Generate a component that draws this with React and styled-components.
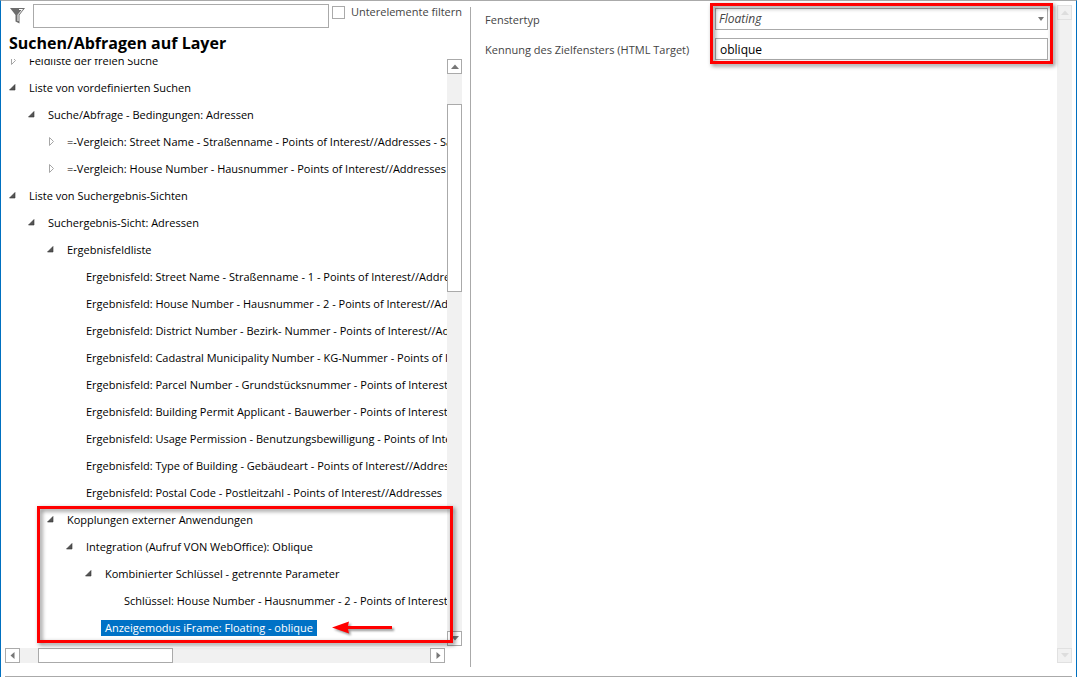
import React from 'react';
import styled, { createGlobalStyle, css } from 'styled-components';

const GlobalStyle = createGlobalStyle`
    * {
        box-sizing: border-box;
    }
    body {
        margin: 0;
        background-color: #fff;
        font-family: 'Open Sans', 'Noto Sans', sans-serif;
        font-size: 11px;
        color: #444;
    }
`

// toggle: 'open', 'closed' or nothing for a leaf
const nodes = [
    {level: 0, toggle: 'closed', title: 'Feldliste der freien Suche'},
    {level: 0, toggle: 'open', title: 'Liste von vordefinierten Suchen'},
    {level: 1, toggle: 'open', title: 'Suche/Abfrage - Bedingungen: Adressen'},
    {level: 2, toggle: 'closed', title: '=-Vergleich: Street Name - Straßenname - Points of Interest//Addresses - Sa'},
    {level: 2, toggle: 'closed', title: '=-Vergleich: House Number - Hausnummer - Points of Interest//Addresses'},
    {level: 0, toggle: 'open', title: 'Liste von Suchergebnis-Sichten'},
    {level: 1, toggle: 'open', title: 'Suchergebnis-Sicht: Adressen'},
    {level: 2, toggle: 'open', title: 'Ergebnisfeldliste'},
    {level: 3, title: 'Ergebnisfeld: Street Name - Straßenname - 1 - Points of Interest//Addresses'},
    {level: 3, title: 'Ergebnisfeld: House Number - Hausnummer - 2 - Points of Interest//Addresses'},
    {level: 3, title: 'Ergebnisfeld: District Number - Bezirk- Nummer - Points of Interest//Addresses'},
    {level: 3, title: 'Ergebnisfeld: Cadastral Municipality Number - KG-Nummer - Points of Interest'},
    {level: 3, title: 'Ergebnisfeld: Parcel Number - Grundstücksnummer - Points of Interest'},
    {level: 3, title: 'Ergebnisfeld: Building Permit Applicant - Bauwerber - Points of Interest'},
    {level: 3, title: 'Ergebnisfeld: Usage Permission - Benutzungsbewilligung - Points of Interest'},
    {level: 3, title: 'Ergebnisfeld: Type of Building - Gebäudeart - Points of Interest//Addresses'},
    {level: 3, title: 'Ergebnisfeld: Postal Code - Postleitzahl - Points of Interest//Addresses'},
    {level: 2, toggle: 'open', title: 'Kopplungen externer Anwendungen'},
    {level: 3, toggle: 'open', title: 'Integration (Aufruf VON WebOffice): Oblique'},
    {level: 4, toggle: 'open', title: 'Kombinierter Schlüssel - getrennte Parameter'},
    {level: 5, title: 'Schlüssel: House Number - Hausnummer - 2 - Points of Interest'},
    {level: 4, title: 'Anzeigemodus iFrame: Floating - oblique', marked: true},
];

const arrows = {
    up: 'M4 0.5 L8 5 H0 Z',
    down: 'M0 0 H8 L4 4.5 Z',
    left: 'M5.5 -1 V6 L1.5 2.5 Z',
    right: 'M2.5 -1 V6 L6.5 2.5 Z',
};

const ScrollBar = ({horizontal, disabled, before, thumb, after}) => {
    const [first, last] = horizontal ? ['left', 'right'] : ['up', 'down'];
    return (
        <Track $horizontal={horizontal}>
            <ScrollButton type="button" aria-label={first} disabled={disabled}>
                <Arrow viewBox="0 0 8 5"><path d={arrows[first]} /></Arrow>
            </ScrollButton>
            <Space $size={before} />
            {thumb && <Thumb $size={thumb} $horizontal={horizontal} />}
            <Space $size={after} />
            <ScrollButton type="button" aria-label={last} disabled={disabled}>
                <Arrow viewBox="0 0 8 5"><path d={arrows[last]} /></Arrow>
            </ScrollButton>
        </Track>
    )
};

const TreeNode = ({node, selected, handleSelect}) => {
    return (
        <Row $level={node.level} role="treeitem" aria-level={node.level + 1} aria-selected={selected}>
            <Toggle>
                {node.toggle === 'open' &&
                    <svg width="7" height="7"><path d="M6 0.5 V6 H0.5 Z" fill="#555" stroke="#333" strokeWidth="0.6" /></svg>}
                {node.toggle === 'closed' &&
                    <svg width="7" height="9"><path d="M2.5 0.5 V8.5 L6.5 4.5 Z" fill="#fff" stroke="#a6a6a6" /></svg>}
            </Toggle>
            <Title type="button" $selected={selected} onClick={() => handleSelect(node.title)}>
                {node.title}
            </Title>
            {node.marked &&
                <Pointer viewBox="0 0 62 14">
                    <path d="M0 6.5 L17 0.5 L16 5 H60 V8 H16 L17 12.5 Z" fill="#f00" />
                </Pointer>}
        </Row>
    )
};

const App = () => {
    const [selected, setSelected] = React.useState('Anzeigemodus iFrame: Floating - oblique');

    return (
        <>
            <GlobalStyle />
            <Window>
                <Columns>
                    <LeftPane>
                        <FilterBar>
                            <Funnel viewBox="0 0 15 16">
                                <path d="M0 0 H15 L9.5 7 V15.5 L5.5 13.5 V7 Z" fill="#6d6d6d" />
                                <path d="M9 1.5 H12.5 L8 6.8 V13" fill="none" stroke="#fff" />
                            </Funnel>
                            <FilterInput type="text" aria-label="Filter" />
                            <CheckLabel>
                                <Check type="checkbox" />
                                Unterelemente filtern
                            </CheckLabel>
                        </FilterBar>
                        <Heading>Suchen/Abfragen auf Layer</Heading>
                        <TreeArea>
                            <Tree role="tree">
                                {nodes.map((node) => (
                                    <TreeNode
                                    key={node.title}
                                    node={node}
                                    selected={node.title === selected}
                                    handleSelect={setSelected}
                                    />
                                ))}
                            </Tree>
                            <ScrollBar before={30} thumb={186} after={340} />
                            <TreeMark />
                        </TreeArea>
                        <BottomScroll>
                            <ScrollBar horizontal before={18} thumb={134} after={258} />
                        </BottomScroll>
                    </LeftPane>
                    <RightPane>
                        <Form>
                            <label htmlFor="typ">Fenstertyp</label>
                            <SelectWrap>
                                <Select id="typ" defaultValue="Floating">
                                    <option>Floating</option>
                                </Select>
                                <Chevron viewBox="0 0 6 4"><path d="M0 0 H6 L3 4 Z" /></Chevron>
                            </SelectWrap>
                            <label htmlFor="target">Kennung des Zielfensters (HTML Target)</label>
                            <TextInput id="target" type="text" defaultValue="oblique" />
                            <FormMark />
                        </Form>
                        <ScrollBar disabled after={1} />
                    </RightPane>
                </Columns>
            </Window>
        </>
    )
};

const Window = styled('main')`
    display: flex;
    flex-direction: column;
    height: 100vh;
    border: 1px solid #0070c0;
    border-top-color: #aaa;
    border-bottom: 0;
    padding: 0 4px;
`
const Columns = styled('div')`
    flex: 1;
    min-height: 0;
    display: grid;
    grid-template-columns: 38fr 49fr;
    grid-template-rows: minmax(0, 1fr);
    padding-bottom: 9px;
    border-bottom: 1px solid #aaa;
`
const LeftPane = styled('section')`
    display: flex;
    flex-direction: column;
    min-width: 0;
    padding: 3px 9px 4px 0;
    position: relative;
    &::after {
        content: '';
        position: absolute;
        top: 6px;
        right: 0;
        bottom: 0;
        width: 1px;
        background-color: #aaa;
    }
`
const FilterBar = styled('div')`
    display: flex;
    align-items: flex-start;
    gap: 3px;
`
const Funnel = styled('svg')`
    width: 15px;
    height: 16px;
    margin: 4px 5px 0;
`
const FilterInput = styled('input')`
    flex: 1;
    min-width: 0;
    height: 24px;
    border: 1px solid #aaa;
    padding: 0 4px;
    font: inherit;
`
const CheckLabel = styled('label')`
    display: flex;
    align-items: center;
    gap: 6px;
    line-height: 16px;
    white-space: nowrap;
`
const Check = styled('input')`
    appearance: none;
    width: 13px;
    height: 13px;
    margin: 0;
    border: 1px solid #aaa;
    background-color: #fff;
`
const Heading = styled('h1')`
    margin: 3px 0 4px 4px;
    font-size: 16px;
    line-height: 24px;
    font-weight: bold;
    color: #000;
`
const TreeArea = styled('div')`
    position: relative;
    flex: 1;
    min-height: 0;
    display: flex;
    padding-bottom: 2px;
`
/* scrolled to its end, so the first row is cut at the top */
const Tree = styled('ul')`
    flex: 1;
    min-width: 0;
    display: flex;
    flex-direction: column;
    justify-content: flex-end;
    overflow: hidden;
    margin: 0;
    padding: 0 0 5px 3px;
    list-style: none;
`
const Row = styled('li')`
    flex: none;
    display: flex;
    align-items: center;
    height: 27px;
    padding-left: ${({$level}) => $level * 19}px;
`
const Toggle = styled('span')`
    flex: none;
    display: flex;
    justify-content: center;
    width: 17px;
    padding-right: 8px;
`
const Title = styled('button')`
    flex: none;
    border: 0;
    padding: 0 4px;
    font: inherit;
    line-height: 16px;
    white-space: nowrap;
    color: ${({$selected}) => $selected ? '#fff' : '#000'};
    background-color: ${({$selected}) => $selected ? '#0072c6' : 'transparent'};
`
const Pointer = styled('svg')`
    flex: none;
    width: 62px;
    height: 14px;
    margin-left: 15px;
    overflow: visible;
    filter: drop-shadow(2px 2px 1px rgba(0, 0, 0, 0.4));
`
const Track = styled('div')`
    flex: none;
    display: flex;
    flex-direction: ${({$horizontal}) => $horizontal ? 'row' : 'column'};
    background-color: #f1f1f1;
    ${({$horizontal}) => $horizontal ? css`height: 15px;` : css`width: 15px;`}
`
const ScrollButton = styled('button')`
    flex: none;
    display: flex;
    align-items: center;
    justify-content: center;
    width: 15px;
    height: 15px;
    padding: 0;
    border: 1px solid #aaa;
    background-color: #fff;
    fill: #777;
    &:disabled {
        border-color: #e1e1e1;
        background-color: #f1f1f1;
        fill: #ddd;
    }
`
const Arrow = styled('svg')`
    width: 8px;
    height: 5px;
    overflow: visible;
`
const Space = styled('div')`
    flex: ${({$size}) => $size} 1 0;
`
const Thumb = styled('div')`
    flex: ${({$size}) => $size} 1 0;
    border: 1px solid #aaa;
    background-color: #fff;
`
const BottomScroll = styled('div')`
    padding-right: 17px;
`
const Mark = styled('div')`
    position: absolute;
    border: 3px solid #f00;
    pointer-events: none;
    filter: drop-shadow(2px 2px 2px rgba(0, 0, 0, 0.5));
`
const TreeMark = styled(Mark)`
    left: 32px;
    right: 9px;
    bottom: 5px;
    height: 137px;
`
const RightPane = styled('section')`
    display: flex;
    min-width: 0;
    padding: 4px 0 4px 14px;
`
const Form = styled('div')`
    position: relative;
    flex: 1;
    min-width: 0;
    display: grid;
    grid-template-columns: 230px minmax(0, 1fr);
    grid-auto-rows: 22px;
    align-content: start;
    align-items: center;
    row-gap: 8px;
    padding: 3px 9px 0 0;
`
const SelectWrap = styled('div')`
    position: relative;
    display: flex;
`
const Select = styled('select')`
    appearance: none;
    flex: 1;
    height: 22px;
    border: 1px solid #aaa;
    border-radius: 0;
    padding: 0 16px 2px 3px;
    background-color: #fff;
    font: inherit;
    font-size: 12px;
    font-style: italic;
    color: #444;
`
const Chevron = styled('svg')`
    position: absolute;
    top: 9px;
    right: 4px;
    width: 6px;
    height: 4px;
    fill: #777;
    pointer-events: none;
`
const TextInput = styled('input')`
    width: 100%;
    height: 22px;
    border: 1px solid #aaa;
    padding: 0 4px;
    font: inherit;
    font-size: 12px;
    color: #000;
`
const FormMark = styled(Mark)`
    top: -2px;
    left: 225px;
    right: 4px;
    height: 61px;
`

export default App;
